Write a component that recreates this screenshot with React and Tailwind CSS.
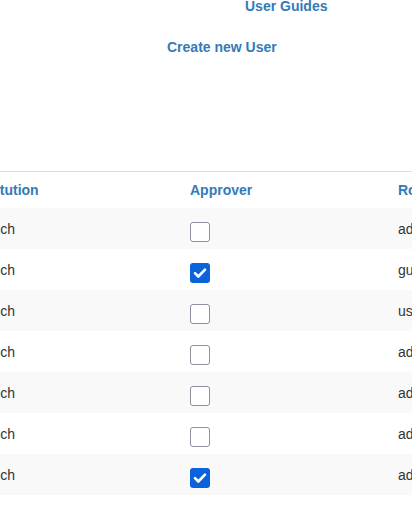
import React from 'react';

const rows = [
  { inst: 'Munich', approver: false, role: 'admin' },
  { inst: 'Munich', approver: true, role: 'guest' },
  { inst: 'Munich', approver: false, role: 'user' },
  { inst: 'Munich', approver: false, role: 'admin' },
  { inst: 'Munich', approver: false, role: 'admin' },
  { inst: 'Munich', approver: false, role: 'admin' },
  { inst: 'Munich', approver: true, role: 'admin' },
];

function Checkbox({ checked }) {
  if (checked) {
    return (
      <span className="flex h-[20px] w-[20px] items-center justify-center rounded-[3px] bg-[#0b63dc]">
        <svg viewBox="0 0 20 20" className="h-[20px] w-[20px]" fill="none">
          <path d="M5 10.2l3.3 3.3L15 6.6" stroke="#fff" strokeWidth="2.6" strokeLinecap="round" strokeLinejoin="round" />
        </svg>
      </span>
    );
  }
  return <span className="block h-[20px] w-[20px] rounded-[3px] border border-[#8f8f9d] bg-white" />;
}

export default function App() {
  return (
    <div className="h-[511px] w-[412px] overflow-hidden bg-white text-[14px] text-[#333] font-['Liberation_Sans',Arial,sans-serif]">
      {/* Links */}
      <div className="pl-[245px] pt-[-2px] leading-[12px] font-bold text-[#337ab7]">User Guides</div>
      <div className="mt-[28px] pl-[167px] leading-[14px] font-bold text-[#337ab7]">Create new User</div>

      {/* Table */}
      <div className="mt-[117px] border-t border-[#dddddd]">
        <div className="grid h-[36px] grid-cols-[219px_208px_100px] items-center -ml-[29px] font-bold text-[#337ab7]">
          <div>Institution</div>
          <div>Approver</div>
          <div>Role</div>
        </div>
        {rows.map((r, i) => (
          <div
            key={i}
            className={`grid h-[41px] grid-cols-[220px_208px_100px] -ml-[30px] ${i % 2 === 0 ? 'bg-[#f9f9f9]' : 'bg-white'}`}
          >
            <div className="pt-[11px] leading-[20px]">{r.inst}</div>
            <div className="pt-[14px]">
              <Checkbox checked={r.approver} />
            </div>
            <div className="pt-[11px] leading-[20px]">{r.role}</div>
          </div>
        ))}
      </div>
    </div>
  );
}
